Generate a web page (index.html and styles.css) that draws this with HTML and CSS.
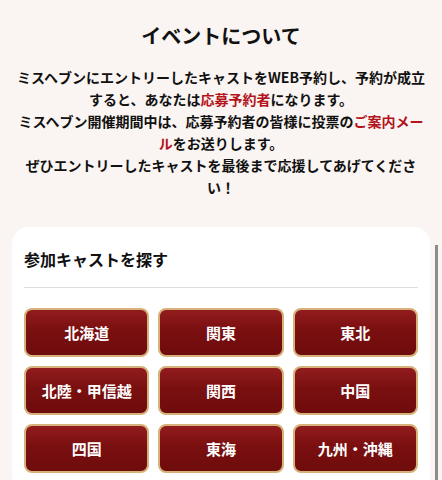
FILE: index.html
```html
<!DOCTYPE html>
<html lang="ja">
<head>
  <meta charset="UTF-8" />
  <meta name="viewport" content="width=device-width, initial-scale=1.0"/>
  <title>イベントについて</title>
  <link rel="stylesheet" href="styles.css">
</head>
<body>
  <section class="about">
    <h1>イベントについて</h1>
    <p>
      ミスヘブンにエントリーしたキャストをWEB予約し、予約が成立すると、あなたは<span class="em">応募予約者</span>になります。<br>
      ミスヘブン開催期間中は、応募予約者の皆様に投票の<span class="em">ご案内メール</span>をお送りします。<br>
      ぜひエントリーしたキャストを最後まで応援してあげてください！
    </p>
  </section>

  <section class="search-card">
    <h2>参加キャストを探す</h2>
    <div class="area-grid">
      <a class="area-btn" href="#">北海道</a>
      <a class="area-btn" href="#">関東</a>
      <a class="area-btn" href="#">東北</a>
      <a class="area-btn" href="#">北陸・甲信越</a>
      <a class="area-btn" href="#">関西</a>
      <a class="area-btn" href="#">中国</a>
      <a class="area-btn" href="#">四国</a>
      <a class="area-btn" href="#">東海</a>
      <a class="area-btn" href="#">九州・沖縄</a>
    </div>
  </section>

  <div class="scroll-thumb"></div>
</body>
</html>
```

FILE: styles.css
```css
body {
  margin: 0;
  padding: 0 12px;
  background: #faf5f2;
  color: #111;
  font-family: "Noto Sans CJK JP", "Noto Sans", sans-serif;
  overflow: hidden;
}

.about {
  text-align: center;
  padding-top: 21px;
}

.about h1 {
  margin: 0;
  font-size: 20px;
  line-height: 30px;
  font-weight: bold;
}

.about p {
  margin: 15px 0 0;
  font-size: 14px;
  line-height: 22px;
  font-weight: bold;
}

.about .em {
  color: #b3141c;
}

.search-card {
  margin-top: 29px;
  background: #fff;
  border-radius: 16px;
  padding: 20px 12px 20px;
}

.search-card h2 {
  margin: 0;
  padding-bottom: 16px;
  border-bottom: 1px solid #dedede;
  font-size: 16px;
  line-height: 24px;
  font-weight: bold;
}

.area-grid {
  margin-top: 20px;
  display: grid;
  grid-template-columns: repeat(3, 1fr);
  gap: 9px;
}

.area-btn {
  display: flex;
  align-items: center;
  justify-content: center;
  height: 45px;
  border: 2px solid #d6b27a;
  border-radius: 8px;
  background: linear-gradient(to bottom, #921c1e 0%, #7a0f10 45%, #6f0c0c 100%);
  color: #fff;
  font-size: 15px;
  font-weight: bold;
  text-decoration: none;
}

.scroll-thumb {
  position: fixed;
  top: 245px;
  right: 4px;
  width: 3px;
  height: 240px;
  background: #8c8c8c;
}
```
